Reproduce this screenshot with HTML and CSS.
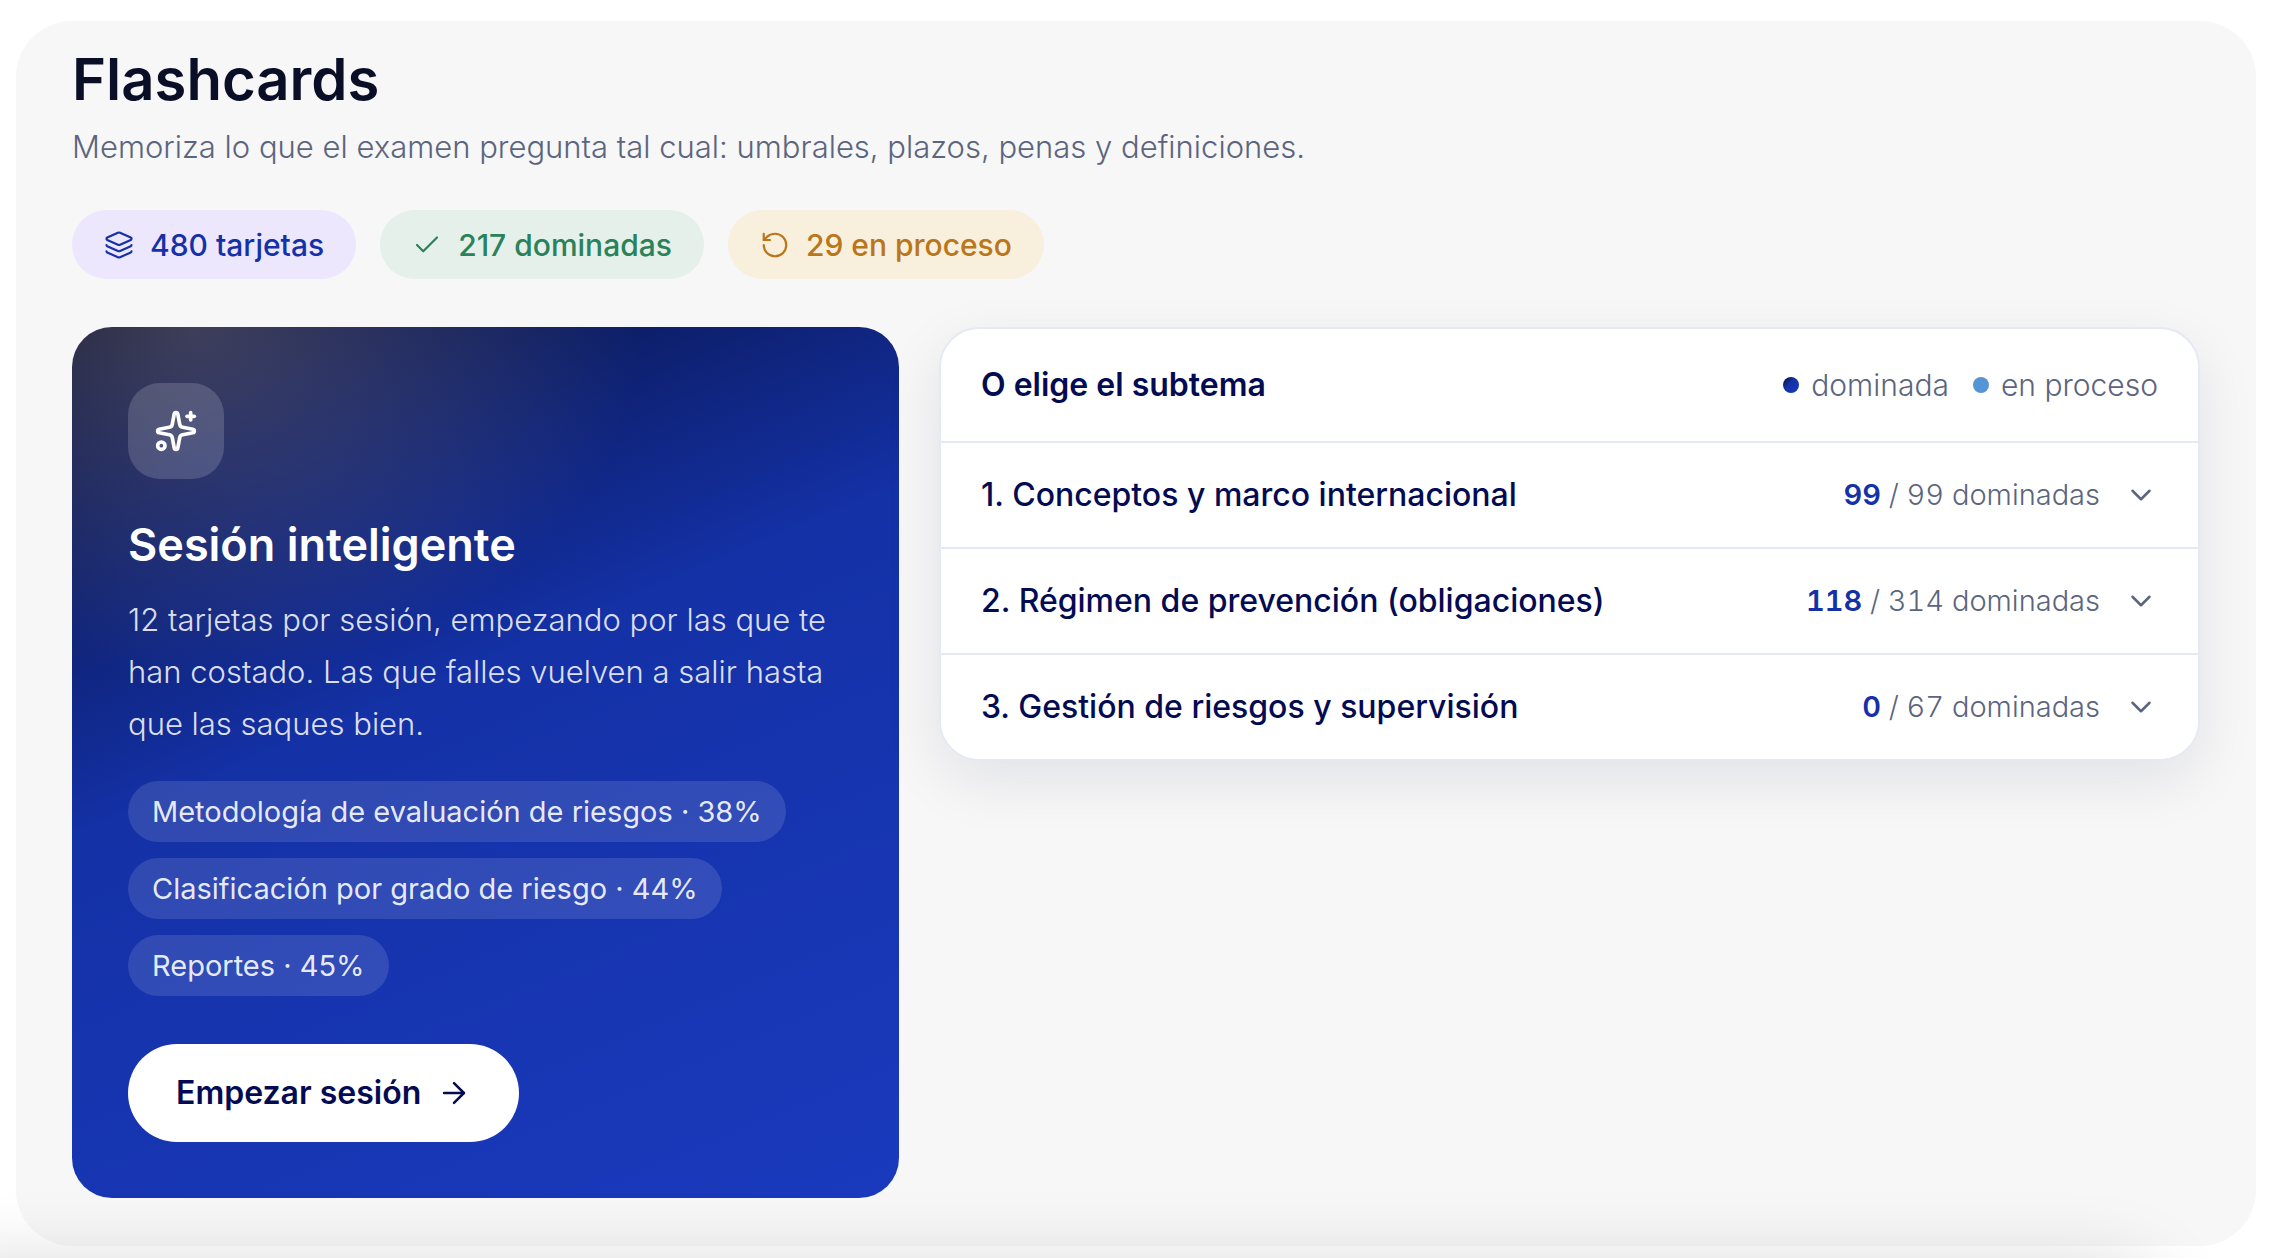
FILE: index.html
```html
<!DOCTYPE html>
<html lang="es">
    <head>
        <title>Flashcards</title>
        <meta charset="utf8"/>
        <link rel="stylesheet" href="styles.css">
    </head>
    <body>
        <main class="panel">
            <h1>Flashcards</h1>
            <p class="subtitle">Memoriza lo que el examen pregunta tal cual: umbrales, plazos, penas y definiciones.</p>
            <ul class="stats">
                <li class="total">
                    <svg class="icon" viewBox="0 0 24 24"><path d="M12.83 2.18a2 2 0 0 0-1.66 0L2.6 6.08a1 1 0 0 0 0 1.83l8.58 3.91a2 2 0 0 0 1.66 0l8.58-3.9a1 1 0 0 0 0-1.83z"/><path d="M2 12a1 1 0 0 0 .58.91l8.6 3.91a2 2 0 0 0 1.65 0l8.58-3.9A1 1 0 0 0 22 12"/><path d="M2 17a1 1 0 0 0 .58.91l8.6 3.91a2 2 0 0 0 1.65 0l8.58-3.9A1 1 0 0 0 22 17"/></svg>
                    480 tarjetas
                </li>
                <li class="done">
                    <svg class="icon" viewBox="0 0 24 24"><path d="M20 6 9 17l-5-5"/></svg>
                    217 dominadas
                </li>
                <li class="pending">
                    <svg class="icon" viewBox="0 0 24 24"><path d="M3 12a9 9 0 1 0 9-9 9.75 9.75 0 0 0-6.74 2.74L3 8"/><path d="M3 3v5h5"/></svg>
                    29 en proceso
                </li>
            </ul>
            <div class="columns">
                <section class="session">
                    <div class="badge">
                        <svg class="icon" viewBox="0 0 24 24"><path d="M11.017 2.814a1 1 0 0 1 1.966 0l1.051 5.558a2 2 0 0 0 1.594 1.594l5.558 1.051a1 1 0 0 1 0 1.966l-5.558 1.051a2 2 0 0 0-1.594 1.594l-1.051 5.558a1 1 0 0 1-1.966 0l-1.051-5.558a2 2 0 0 0-1.594-1.594l-5.558-1.051a1 1 0 0 1 0-1.966l5.558-1.051a2 2 0 0 0 1.594-1.594z"/><path d="M20 2v4"/><path d="M22 4h-4"/><circle cx="4" cy="20" r="2"/></svg>
                    </div>
                    <h2>Sesión inteligente</h2>
                    <p>12 tarjetas por sesión, empezando por las que te han costado. Las que falles vuelven a salir hasta que las saques bien.</p>
                    <ul class="weak">
                        <li>Metodología de evaluación de riesgos · 38%</li>
                        <li>Clasificación por grado de riesgo · 44%</li>
                        <li>Reportes · 45%</li>
                    </ul>
                    <button class="start" type="button">
                        Empezar sesión
                        <svg class="icon" viewBox="0 0 24 24"><path d="M5 12h14"/><path d="m12 5 7 7-7 7"/></svg>
                    </button>
                </section>
                <section class="topics">
                    <header>
                        <h3>O elige el subtema</h3>
                        <div class="legend">
                            <span><i class="dot dark"></i>dominada</span>
                            <span><i class="dot light"></i>en proceso</span>
                        </div>
                    </header>
                    <button class="topic" type="button">
                        <span class="name">1. Conceptos y marco internacional</span>
                        <span class="count"><b>99</b> / 99 dominadas</span>
                        <svg class="icon" viewBox="0 0 24 24"><path d="m6 9 6 6 6-6"/></svg>
                    </button>
                    <button class="topic" type="button">
                        <span class="name">2. Régimen de prevención (obligaciones)</span>
                        <span class="count"><b>118</b> / 314 dominadas</span>
                        <svg class="icon" viewBox="0 0 24 24"><path d="m6 9 6 6 6-6"/></svg>
                    </button>
                    <button class="topic" type="button">
                        <span class="name">3. Gestión de riesgos y supervisión</span>
                        <span class="count"><b>0</b> / 67 dominadas</span>
                        <svg class="icon" viewBox="0 0 24 24"><path d="m6 9 6 6 6-6"/></svg>
                    </button>
                </section>
            </div>
        </main>
        <div class="dock"></div>
    </body>
</html>
```
FILE: styles.css
```css
*{
    box-sizing: border-box;
}
body,h1,h2,h3,p,ul,li,button{
    margin: 0px;
    padding: 0px;
    list-style: none;
    border: 0px;
}
body{
    padding: 21px 14px 12px 16px;
    background-color: #fff;
    font-family: "Inter", "Liberation Sans", sans-serif;
    font-size: 30px;
    line-height: 48px;
    color: #030b52;
}
button{
    font: inherit;
    color: inherit;
    cursor: pointer;
}
.icon{
    flex: none;
    width: 34px;
    height: 34px;
    fill: none;
    stroke: currentColor;
    stroke-width: 1.75;
    stroke-linecap: round;
    stroke-linejoin: round;
}
.panel{
    padding: 26px 56px 48px;
    border-radius: 56px;
    background-color: #f7f7f7;
}
h1{
    font-size: 58px;
    line-height: 64px;
    font-weight: 600;
    color: #0a0e27;
}
.subtitle{
    margin-top: 12px;
    font-size: 31px;
    font-weight: 300;
    color: #5b657e;
}
/* 统计标签 */
.stats{
    display: flex;
    flex-wrap: wrap;
    gap: 24px;
    margin: 39px 0px 48px;
}
.stats li{
    display: flex;
    align-items: center;
    gap: 16px;
    height: 69px;
    padding: 0px 32px;
    border-radius: 35px;
    font-weight: 500;
}
.stats .icon{
    width: 30px;
    height: 30px;
}
.total{
    background-color: #ece7fd;
    color: #1531a8;
}
.done{
    background-color: #e4f0e9;
    color: #2a815a;
}
.pending{
    background-color: #f8efdd;
    color: #b9761a;
}
.columns{
    display: grid;
    grid-template-columns: 827fr 1261fr;
    gap: 40px;
    align-items: start;
}
.session{
    padding: 56px;
    border-radius: 40px;
    background: radial-gradient(120% 90% at 15% 0%, rgba(255,220,180,.22), rgba(255,220,180,0) 45%),
        linear-gradient(157deg, #060e34, #1431a6 42%, #1a3abe);
    color: #fff;
}
.badge{
    display: flex;
    align-items: center;
    justify-content: center;
    width: 96px;
    height: 96px;
    border-radius: 32px;
    background-color: rgba(255,255,255,.16);
}
.badge .icon{
    width: 44px;
    height: 44px;
    stroke-width: 2;
}
h2{
    margin-top: 40px;
    font-size: 45px;
    line-height: 52px;
    font-weight: 600;
}
.session p{
    margin-top: 23px;
    font-size: 31px;
    line-height: 52px;
    font-weight: 300;
    color: rgba(255,255,255,.86);
}
.weak{
    display: flex;
    flex-direction: column;
    align-items: flex-start;
    gap: 16px;
    margin: 31px 0px 48px;
    font-size: 29px;
}
.weak li{
    padding: 7px 24px 6px;
    border-radius: 31px;
    background-color: rgba(255,255,255,.12);
    color: rgba(255,255,255,.9);
}
.start{
    display: flex;
    align-items: center;
    gap: 16px;
    height: 98px;
    padding: 0px 48px;
    border-radius: 49px;
    background-color: #fff;
    font-size: 32px;
    font-weight: 600;
    color: #030b52;
}
.topics{
    border: 2px solid #e5e9f4;
    border-radius: 40px;
    background-color: #fff;
    box-shadow: 0px 20px 60px rgba(10,20,80,.09);
    overflow: hidden;
}
.topics header{
    display: flex;
    align-items: center;
    justify-content: space-between;
    height: 112px;
    padding: 0px 40px;
}
h3{
    font-size: 32px;
    font-weight: 600;
}
.legend{
    display: flex;
    gap: 24px;
    font-weight: 300;
    color: #5b657e;
}
.legend span{
    display: flex;
    align-items: center;
    gap: 12px;
}
.dot{
    width: 16px;
    height: 16px;
    border-radius: 50%;
}
.dot.dark{
    background: linear-gradient(135deg, #060e34, #1431a6 42%, #1a3abe);
}
.dot.light{
    background-color: #5594d5;
}
.topic{
    display: flex;
    align-items: center;
    gap: 24px;
    width: 100%;
    height: 106px;
    padding: 0px 40px;
    border-top: 2px solid #e5e9f4;
    background-color: #fff;
    text-align: left;
}
.name{
    flex: 1;
    font-size: 32px;
    font-weight: 500;
}
.count{
    font-size: 29px;
    font-weight: 300;
    font-variant-numeric: tabular-nums;
    color: #5b657e;
}
.count b{
    font-weight: 600;
    color: #1531a8;
}
.topic .icon{
    color: #5b657e;
}
/* 底部阴影 */
.dock{
    position: fixed;
    top: calc(100% + 12px);
    left: -80px;
    right: 115px;
    height: 80px;
    border-radius: 40px;
    box-shadow: 0px 0px 80px rgba(0,0,0,.18);
    pointer-events: none;
}
```
